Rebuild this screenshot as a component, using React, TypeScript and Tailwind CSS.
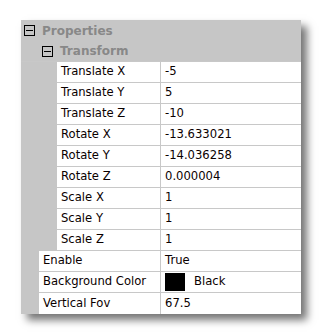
import React from "react";

const Minus = () => (
  <div className="w-[11px] h-[11px] border border-black flex items-center justify-center shrink-0">
    <div className="w-[7px] h-px bg-black" />
  </div>
);

const Row = ({ indent, label, children, last }: { indent: "t" | "b"; label: string; children: React.ReactNode; last?: boolean }) => (
  <div className="flex h-[21px]">
    <div className={indent === "t" ? "w-[36px] shrink-0" : "w-[18px] shrink-0"} />
    <div className={"flex flex-1 bg-white " + (last ? "" : "border-b border-[#c8c8c8]")}>
      <div className={(indent === "t" ? "w-[104px]" : "w-[122px]") + " shrink-0 border-r border-[#c8c8c8] pl-[4px] flex items-center text-[#0a0000]"}>{label}</div>
      <div className="flex-1 pl-[4px] flex items-center text-[#0a0000]">{children}</div>
    </div>
  </div>
);

export default function App() {
  const t: [string, string][] = [
    ["Translate X", "-5"],
    ["Translate Y", "5"],
    ["Translate Z", "-10"],
    ["Rotate X", "-13.633021"],
    ["Rotate Y", "-14.036258"],
    ["Rotate Z", "0.000004"],
    ["Scale X", "1"],
    ["Scale Y", "1"],
    ["Scale Z", "1"],
  ];
  return (
    <div className="w-[322px] h-[335px] bg-white pt-[20px] pl-[21px]" style={{ fontFamily: '"DejaVu Sans", sans-serif' }}>
      <div className="w-[280px] bg-[#c6c6c6] shadow-[6px_6px_8px_rgba(0,0,0,0.55)] text-[11.6px]">
        <div className="h-[21px] flex items-center pl-[3px] gap-[7px]">
          <Minus />
          <span className="font-bold text-[12px] text-[#888888]">Properties</span>
        </div>
        <div className="h-[21px] flex items-center pl-[21px] gap-[7px] border-b border-[#c8c8c8]">
          <Minus />
          <span className="font-bold text-[12px] text-[#888888]">Transform</span>
        </div>
        {t.map(([l, v]) => (
          <Row key={l} indent="t" label={l}>{v}</Row>
        ))}
        <Row indent="b" label="Enable">True</Row>
        <Row indent="b" label="Background Color">
          <div className="w-[20px] h-[18px] bg-black mr-[9px]" />
          Black
        </Row>
        <Row indent="b" label="Vertical Fov" last>67.5</Row>
      </div>
    </div>
  );
}
